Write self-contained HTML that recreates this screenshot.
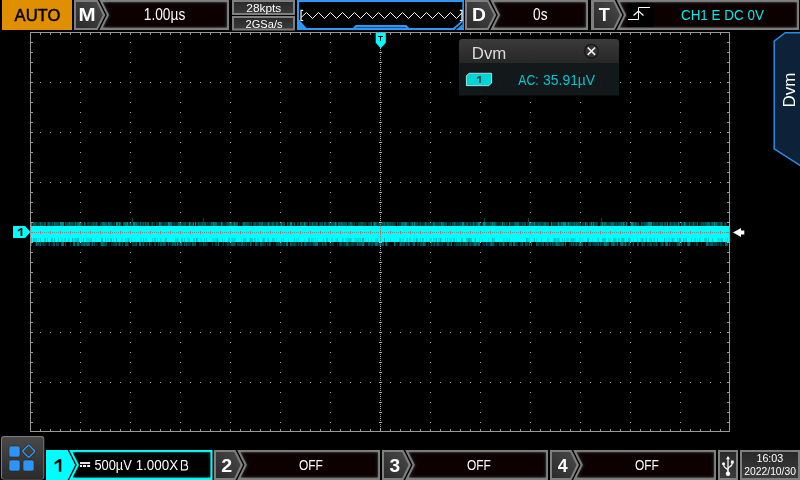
<!DOCTYPE html>
<html><head><meta charset="utf-8"><title>Scope</title>
<style>
html,body{margin:0;padding:0;background:#000;overflow:hidden}
body{width:800px;height:480px;position:relative;font-family:"Liberation Sans",sans-serif}
svg{position:absolute;left:0;top:0;display:block}
text{font-family:"Liberation Sans",sans-serif}
</style></head><body>
<svg width="800" height="480" viewBox="0 0 800 480" style="will-change:transform;opacity:0.9999">
<defs>
<linearGradient id="lab" x1="0" y1="1" x2="1" y2="0">
<stop offset="0" stop-color="#2b2b2b"/><stop offset="1" stop-color="#4a4a4a"/>
</linearGradient>
<linearGradient id="small" x1="0" y1="0" x2="0" y2="1">
<stop offset="0" stop-color="#2a2a2a"/><stop offset="1" stop-color="#3c3c3c"/>
</linearGradient>
<linearGradient id="menu" x1="0" y1="0" x2="0" y2="1">
<stop offset="0" stop-color="#4a4a4a"/><stop offset="1" stop-color="#2c2c2c"/>
</linearGradient>
<linearGradient id="dvmh" x1="0" y1="0" x2="0" y2="1">
<stop offset="0" stop-color="#404040"/><stop offset="1" stop-color="#2b2b2b"/>
</linearGradient>
<filter id="blur1" x="-10%" y="-10%" width="120%" height="120%"><feGaussianBlur stdDeviation="0.8"/></filter>
</defs>
<rect width="800" height="480" fill="#000"/>

<g id="topbar">
<rect x="2" y="0" width="70" height="30" fill="#e09000"/>
<text transform="translate(14.56,20.7) scale(1.0378,1)" font-size="16" fill="#000" font-weight="normal" stroke="#000" stroke-width="0.45">AUTO</text>
<polygon points="74,0 97.7,0 105.3,15.0 97.7,30 74,30" fill="#808080"/>
<polygon points="76,2 96.51333333333334,2 102.8,15.0 96.51333333333334,28 76,28" fill="url(#lab)"/>
<text transform="translate(78.51,21) scale(1.1241,1)" font-size="18.3" fill="#fff" font-weight="bold">M</text>
<polygon points="99.3,0 229,0 229,30 99.3,30 106.8,15.0" fill="#808080"/>
<polygon points="102.78,2.15 226.85,2.15 226.85,27.6 102.90,27.6 109.20,15.0" fill="#242020"/>
<polygon points="105.29,3.7 225.3,3.7 225.3,26.1 105.39,26.1 110.94,15.0" fill="#080404" stroke="#080404" stroke-width="0.8" stroke-linejoin="round" filter="url(#blur1)"/>
<text transform="translate(143.77,19.8) scale(0.8584,1)" font-size="16" fill="#fff" font-weight="normal">1.00µs</text>
<rect x="232" y="0" width="63" height="15" fill="#808080"/>
<rect x="234" y="2" width="59" height="11" fill="url(#small)"/>
<text transform="translate(246.31,12.1) scale(1.0328,1)" font-size="11.5" fill="#fff" font-weight="normal">28kpts</text>
<rect x="232" y="16" width="63" height="14.5" fill="#808080"/>
<rect x="234" y="18" width="59" height="10.5" fill="url(#small)"/>
<text transform="translate(245.54,28.1) scale(0.9659,1)" font-size="11.5" fill="#fff" font-weight="normal">2GSa/s</text>
<rect x="297" y="0" width="167" height="30" fill="#2b99f8"/>
<rect x="299" y="2" width="163.3" height="26" fill="#000"/>
<polygon points="299,19.5 306.5,28 299,28" fill="#2b99f8"/>
<polygon points="452.8,28.2 462.4,19.9 462.4,22.4 455.8,28.2" fill="#2b99f8"/>
<polygon points="462.4,22.4 462.4,23.9 456.1,30 454.3,30" fill="#000"/>
<polygon points="462.4,23.9 462.4,30 456.1,30" fill="#2b99f8"/>
<polygon points="352.8,28 355.6,25 406.4,25 409.2,28" fill="#2b99f8"/>
<polygon points="355.6,27.9 356.6,26.9 405.4,26.9 406.4,27.9" fill="#184f85"/>
<polyline fill="none" stroke="#fff" stroke-width="1" points="301.3,17.3 306.5,12.5 312.5,18.5 318.5,12.5 324.5,18.5 330.5,12.5 336.5,18.5 342.5,12.5 348.5,18.5 354.5,12.5 360.5,18.5 366.5,12.5 372.5,18.5 378.5,12.5 384.5,18.5 390.5,12.5 396.5,18.5 402.5,12.5 408.5,18.5 414.5,12.5 420.5,18.5 426.5,12.5 432.5,18.5 438.5,12.5 444.5,18.5 450.5,12.5 456.5,18.5 461.8,13"/>
<path d="M303.2 10.4 H301 V20.5 H303.2" fill="none" stroke="#fff" stroke-width="1.2"/>
<path d="M459.8 10.4 H462 V20.5 H459.8" fill="none" stroke="#fff" stroke-width="1.2"/>
<polygon points="465,0 488.5,0 496.3,15.0 488.5,30 465,30" fill="#808080"/>
<polygon points="467,2 487.34000000000003,2 493.8,15.0 487.34000000000003,28 467,28" fill="url(#lab)"/>
<text transform="translate(471.90,21) scale(1.0527,1)" font-size="18.3" fill="#fff" font-weight="bold">D</text>
<polygon points="490.3,0 588,0 588,30 490.3,30 497.8,15.0" fill="#808080"/>
<polygon points="493.78,2.15 585.85,2.15 585.85,27.6 493.90,27.6 500.20,15.0" fill="#242020"/>
<polygon points="496.29,3.7 584.3,3.7 584.3,26.1 496.39,26.1 501.94,15.0" fill="#080404" stroke="#080404" stroke-width="0.8" stroke-linejoin="round" filter="url(#blur1)"/>
<text transform="translate(533.05,19.8) scale(0.8546,1)" font-size="16" fill="#fff" font-weight="normal">0s</text>
<polygon points="591,0 614.7,0 622.3,15.0 614.7,30 591,30" fill="#808080"/>
<polygon points="594,2 613.5133333333333,2 619.8,15.0 613.5133333333333,28 594,28" fill="url(#lab)"/>
<text transform="translate(598.82,21) scale(0.9910,1)" font-size="18.3" fill="#fff" font-weight="bold">T</text>
<polygon points="616.5,0 799,0 799,30 616.5,30 623.9,15.0" fill="#808080"/>
<polygon points="619.96,2.15 796.85,2.15 796.85,27.6 620.08,27.6 626.30,15.0" fill="#242020"/>
<polygon points="622.45,3.7 795.3,3.7 795.3,26.1 622.55,26.1 628.03,15.0" fill="#080404" stroke="#080404" stroke-width="0.8" stroke-linejoin="round" filter="url(#blur1)"/>
<rect x="627" y="3" width="26" height="24" fill="#000"/>
<path d="M628 19.5 H638.5 V7.5 H650" fill="none" stroke="#fff" stroke-width="1"/>
<path d="M633.5 15.5 L638.5 11 L643.5 15.5" fill="none" stroke="#fff" stroke-width="1.2"/>
<text transform="translate(680.93,19.6) scale(0.8683,1)" font-size="15.5" fill="#00ecec" font-weight="normal">CH1 E DC 0V</text>
</g>
<g id="grid" shape-rendering="crispEdges">
<rect x="30.5" y="32.5" width="699" height="399" fill="none" stroke="#9a9a9a" stroke-width="1"/>
<path d="M40 34 H721" stroke="#9a9a9a" stroke-width="2" stroke-dasharray="1 9" fill="none"/>
<path d="M40 430 H721" stroke="#9a9a9a" stroke-width="2" stroke-dasharray="1 9" fill="none"/>
<path d="M32 42 V423" stroke="#9a9a9a" stroke-width="2" stroke-dasharray="1 9" fill="none"/>
<path d="M728 42 V423" stroke="#9a9a9a" stroke-width="2" stroke-dasharray="1 9" fill="none"/>
<path d="M40 82.5 H721" stroke="#a8a8a8" stroke-width="1" stroke-dasharray="1 9" fill="none"/>
<path d="M40 132.5 H721" stroke="#a8a8a8" stroke-width="1" stroke-dasharray="1 9" fill="none"/>
<path d="M40 182.5 H721" stroke="#a8a8a8" stroke-width="1" stroke-dasharray="1 9" fill="none"/>
<path d="M40 282.5 H721" stroke="#a8a8a8" stroke-width="1" stroke-dasharray="1 9" fill="none"/>
<path d="M40 332.5 H721" stroke="#a8a8a8" stroke-width="1" stroke-dasharray="1 9" fill="none"/>
<path d="M40 382.5 H721" stroke="#a8a8a8" stroke-width="1" stroke-dasharray="1 9" fill="none"/>
<path d="M80.5 42 V423" stroke="#a8a8a8" stroke-width="1" stroke-dasharray="1 9" fill="none"/>
<path d="M130.5 42 V423" stroke="#a8a8a8" stroke-width="1" stroke-dasharray="1 9" fill="none"/>
<path d="M180.5 42 V423" stroke="#a8a8a8" stroke-width="1" stroke-dasharray="1 9" fill="none"/>
<path d="M230.5 42 V423" stroke="#a8a8a8" stroke-width="1" stroke-dasharray="1 9" fill="none"/>
<path d="M280.5 42 V423" stroke="#a8a8a8" stroke-width="1" stroke-dasharray="1 9" fill="none"/>
<path d="M330.5 42 V423" stroke="#a8a8a8" stroke-width="1" stroke-dasharray="1 9" fill="none"/>
<path d="M430.5 42 V423" stroke="#a8a8a8" stroke-width="1" stroke-dasharray="1 9" fill="none"/>
<path d="M480.5 42 V423" stroke="#a8a8a8" stroke-width="1" stroke-dasharray="1 9" fill="none"/>
<path d="M530.5 42 V423" stroke="#a8a8a8" stroke-width="1" stroke-dasharray="1 9" fill="none"/>
<path d="M580.5 42 V423" stroke="#a8a8a8" stroke-width="1" stroke-dasharray="1 9" fill="none"/>
<path d="M630.5 42 V423" stroke="#a8a8a8" stroke-width="1" stroke-dasharray="1 9" fill="none"/>
<path d="M680.5 42 V423" stroke="#a8a8a8" stroke-width="1" stroke-dasharray="1 9" fill="none"/>
<path d="M380.5 34 V431" stroke="#a8a8a8" stroke-width="1" stroke-dasharray="1 1" fill="none"/>
<path d="M380.5 42 V423" stroke="#a8a8a8" stroke-width="3" stroke-dasharray="1 9" fill="none"/>
</g>
<g id="trace" shape-rendering="crispEdges">
<rect x="31" y="226" width="698" height="12" fill="#00ffff"/>
<rect x="31" y="238" width="698" height="4" fill="#00ffff"/>
<path d="M32 222h1v4h-1zM37 222h1v4h-1zM43 222h1v4h-1zM50 222h2v4h-2zM53 222h1v4h-1zM59 222h1v4h-1zM82 222h1v4h-1zM89 222h2v4h-2zM97 222h1v4h-1zM107 222h1v4h-1zM112 222h2v4h-2zM121 222h1v4h-1zM132 222h1v4h-1zM139 222h1v4h-1zM141 222h1v4h-1zM144 222h1v4h-1zM153 222h1v4h-1zM154 222h1v4h-1zM157 222h2v4h-2zM162 222h1v4h-1zM163 222h1v4h-1zM172 222h2v4h-2zM175 222h1v4h-1zM176 222h1v4h-1zM186 222h2v4h-2zM196 222h2v4h-2zM206 222h1v4h-1zM208 222h1v4h-1zM209 222h1v4h-1zM217 222h1v4h-1zM218 222h1v4h-1zM219 222h1v4h-1zM220 222h1v4h-1zM223 222h1v4h-1zM224 222h2v4h-2zM239 222h1v4h-1zM250 222h1v4h-1zM256 222h1v4h-1zM263 222h1v4h-1zM266 222h1v4h-1zM270 222h1v4h-1zM275 222h1v4h-1zM279 222h1v4h-1zM288 222h2v4h-2zM292 222h2v4h-2zM298 222h1v4h-1zM326 222h2v4h-2zM353 222h1v4h-1zM356 222h1v4h-1zM366 222h1v4h-1zM395 222h1v4h-1zM398 222h1v4h-1zM400 222h1v4h-1zM413 222h1v4h-1zM418 222h1v4h-1zM421 222h2v4h-2zM423 222h1v4h-1zM427 222h1v4h-1zM448 222h1v4h-1zM449 222h1v4h-1zM456 222h1v4h-1zM465 222h1v4h-1zM468 222h2v4h-2zM471 222h1v4h-1zM475 222h1v4h-1zM480 222h1v4h-1zM481 222h1v4h-1zM497 222h2v4h-2zM499 222h1v4h-1zM501 222h1v4h-1zM503 222h1v4h-1zM507 222h1v4h-1zM519 222h2v4h-2zM521 222h1v4h-1zM523 222h1v4h-1zM556 222h1v4h-1zM584 222h1v4h-1zM607 222h1v4h-1zM617 222h1v4h-1zM627 222h1v4h-1zM643 222h1v4h-1zM652 222h1v4h-1zM658 222h1v4h-1zM659 222h1v4h-1zM666 222h1v4h-1zM677 222h1v4h-1zM687 222h2v4h-2zM690 222h1v4h-1zM696 222h1v4h-1zM699 222h2v4h-2zM710 222h1v4h-1zM722 222h1v4h-1zM724 222h1v4h-1zM726 222h1v4h-1z" fill="#003030"/>
<path d="M36 222h1v4h-1zM38 222h1v4h-1zM39 222h1v4h-1zM41 222h1v4h-1zM42 222h1v4h-1zM47 222h1v4h-1zM58 222h1v4h-1zM66 222h1v4h-1zM73 222h1v4h-1zM74 222h1v4h-1zM76 222h1v4h-1zM85 222h1v4h-1zM87 222h1v4h-1zM88 222h1v4h-1zM91 222h2v4h-2zM94 222h2v4h-2zM100 222h2v4h-2zM114 222h1v4h-1zM118 222h1v4h-1zM128 222h1v4h-1zM129 222h1v4h-1zM131 222h1v4h-1zM137 222h1v4h-1zM138 222h1v4h-1zM142 222h1v4h-1zM146 222h1v4h-1zM151 222h1v4h-1zM156 222h1v4h-1zM164 222h1v4h-1zM165 222h1v4h-1zM166 222h1v4h-1zM167 222h1v4h-1zM174 222h1v4h-1zM177 222h1v4h-1zM181 222h1v4h-1zM182 222h1v4h-1zM183 222h1v4h-1zM188 222h1v4h-1zM191 222h2v4h-2zM199 222h1v4h-1zM200 222h1v4h-1zM201 222h1v4h-1zM203 222h1v4h-1zM207 222h1v4h-1zM210 222h1v4h-1zM226 222h1v4h-1zM232 222h1v4h-1zM242 222h1v4h-1zM249 222h1v4h-1zM253 222h1v4h-1zM257 222h2v4h-2zM264 222h2v4h-2zM269 222h1v4h-1zM271 222h1v4h-1zM274 222h1v4h-1zM278 222h1v4h-1zM282 222h1v4h-1zM302 222h1v4h-1zM303 222h1v4h-1zM306 222h2v4h-2zM310 222h2v4h-2zM313 222h1v4h-1zM314 222h1v4h-1zM315 222h1v4h-1zM319 222h1v4h-1zM330 222h1v4h-1zM343 222h1v4h-1zM348 222h1v4h-1zM352 222h1v4h-1zM354 222h1v4h-1zM359 222h1v4h-1zM360 222h1v4h-1zM363 222h1v4h-1zM364 222h1v4h-1zM365 222h1v4h-1zM368 222h1v4h-1zM369 222h2v4h-2zM377 222h1v4h-1zM378 222h1v4h-1zM381 222h1v4h-1zM385 222h1v4h-1zM386 222h1v4h-1zM391 222h1v4h-1zM393 222h1v4h-1zM394 222h1v4h-1zM397 222h1v4h-1zM399 222h1v4h-1zM407 222h2v4h-2zM410 222h1v4h-1zM411 222h1v4h-1zM415 222h2v4h-2zM419 222h1v4h-1zM424 222h1v4h-1zM429 222h1v4h-1zM430 222h1v4h-1zM431 222h1v4h-1zM432 222h1v4h-1zM435 222h2v4h-2zM438 222h1v4h-1zM440 222h1v4h-1zM444 222h1v4h-1zM450 222h1v4h-1zM453 222h1v4h-1zM457 222h1v4h-1zM458 222h1v4h-1zM459 222h1v4h-1zM461 222h1v4h-1zM464 222h1v4h-1zM472 222h1v4h-1zM482 222h1v4h-1zM486 222h2v4h-2zM488 222h1v4h-1zM489 222h1v4h-1zM496 222h1v4h-1zM500 222h1v4h-1zM510 222h1v4h-1zM511 222h1v4h-1zM512 222h1v4h-1zM513 222h1v4h-1zM527 222h1v4h-1zM528 222h1v4h-1zM535 222h1v4h-1zM536 222h1v4h-1zM537 222h1v4h-1zM541 222h1v4h-1zM542 222h1v4h-1zM546 222h1v4h-1zM552 222h1v4h-1zM553 222h2v4h-2zM555 222h1v4h-1zM559 222h1v4h-1zM560 222h1v4h-1zM566 222h1v4h-1zM571 222h1v4h-1zM575 222h1v4h-1zM582 222h2v4h-2zM586 222h1v4h-1zM589 222h2v4h-2zM592 222h1v4h-1zM594 222h2v4h-2zM597 222h1v4h-1zM600 222h1v4h-1zM603 222h1v4h-1zM608 222h1v4h-1zM609 222h1v4h-1zM614 222h2v4h-2zM618 222h1v4h-1zM630 222h1v4h-1zM634 222h1v4h-1zM637 222h2v4h-2zM642 222h1v4h-1zM645 222h1v4h-1zM654 222h1v4h-1zM655 222h2v4h-2zM669 222h1v4h-1zM671 222h1v4h-1zM672 222h2v4h-2zM675 222h2v4h-2zM679 222h1v4h-1zM682 222h2v4h-2zM686 222h1v4h-1zM691 222h2v4h-2zM694 222h1v4h-1zM695 222h1v4h-1zM702 222h1v4h-1zM704 222h1v4h-1zM717 222h1v4h-1zM718 222h2v4h-2z" fill="#004444"/>
<path d="M34 222h1v4h-1zM35 222h1v4h-1zM44 222h1v4h-1zM45 222h1v4h-1zM49 222h1v4h-1zM52 222h1v4h-1zM55 222h2v4h-2zM57 222h1v4h-1zM65 222h1v4h-1zM67 222h2v4h-2zM70 222h1v4h-1zM71 222h2v4h-2zM80 222h2v4h-2zM93 222h1v4h-1zM105 222h1v4h-1zM106 222h1v4h-1zM110 222h2v4h-2zM120 222h1v4h-1zM123 222h1v4h-1zM135 222h1v4h-1zM143 222h1v4h-1zM147 222h1v4h-1zM152 222h1v4h-1zM161 222h1v4h-1zM184 222h1v4h-1zM185 222h1v4h-1zM190 222h1v4h-1zM204 222h1v4h-1zM212 222h1v4h-1zM222 222h1v4h-1zM227 222h1v4h-1zM228 222h1v4h-1zM233 222h1v4h-1zM235 222h1v4h-1zM236 222h1v4h-1zM245 222h2v4h-2zM247 222h1v4h-1zM248 222h1v4h-1zM251 222h1v4h-1zM254 222h1v4h-1zM255 222h1v4h-1zM260 222h1v4h-1zM267 222h1v4h-1zM273 222h1v4h-1zM277 222h1v4h-1zM280 222h1v4h-1zM283 222h1v4h-1zM284 222h1v4h-1zM297 222h1v4h-1zM301 222h1v4h-1zM305 222h1v4h-1zM309 222h1v4h-1zM317 222h1v4h-1zM320 222h1v4h-1zM321 222h1v4h-1zM322 222h1v4h-1zM325 222h1v4h-1zM328 222h1v4h-1zM331 222h2v4h-2zM333 222h1v4h-1zM334 222h1v4h-1zM336 222h1v4h-1zM340 222h1v4h-1zM344 222h1v4h-1zM345 222h2v4h-2zM349 222h1v4h-1zM358 222h1v4h-1zM361 222h1v4h-1zM362 222h1v4h-1zM373 222h1v4h-1zM376 222h1v4h-1zM379 222h2v4h-2zM382 222h1v4h-1zM383 222h1v4h-1zM388 222h2v4h-2zM390 222h1v4h-1zM392 222h1v4h-1zM417 222h1v4h-1zM420 222h1v4h-1zM426 222h1v4h-1zM428 222h1v4h-1zM437 222h1v4h-1zM439 222h1v4h-1zM445 222h2v4h-2zM452 222h1v4h-1zM455 222h1v4h-1zM460 222h1v4h-1zM466 222h1v4h-1zM470 222h1v4h-1zM474 222h1v4h-1zM476 222h1v4h-1zM477 222h1v4h-1zM490 222h2v4h-2zM495 222h1v4h-1zM504 222h1v4h-1zM506 222h1v4h-1zM514 222h1v4h-1zM522 222h1v4h-1zM524 222h1v4h-1zM525 222h1v4h-1zM532 222h2v4h-2zM539 222h1v4h-1zM540 222h1v4h-1zM543 222h1v4h-1zM547 222h2v4h-2zM557 222h1v4h-1zM567 222h1v4h-1zM569 222h1v4h-1zM570 222h1v4h-1zM572 222h2v4h-2zM577 222h1v4h-1zM578 222h1v4h-1zM579 222h1v4h-1zM580 222h1v4h-1zM587 222h1v4h-1zM596 222h1v4h-1zM601 222h1v4h-1zM606 222h1v4h-1zM610 222h1v4h-1zM616 222h1v4h-1zM619 222h1v4h-1zM620 222h1v4h-1zM622 222h1v4h-1zM624 222h1v4h-1zM636 222h1v4h-1zM641 222h1v4h-1zM644 222h1v4h-1zM646 222h1v4h-1zM653 222h1v4h-1zM657 222h1v4h-1zM660 222h2v4h-2zM662 222h1v4h-1zM664 222h1v4h-1zM665 222h1v4h-1zM685 222h1v4h-1zM701 222h1v4h-1zM703 222h1v4h-1zM705 222h1v4h-1zM706 222h1v4h-1zM711 222h1v4h-1zM713 222h1v4h-1zM715 222h1v4h-1zM720 222h1v4h-1zM725 222h1v4h-1z" fill="#005858"/>
<path d="M33 222h1v4h-1zM40 222h1v4h-1zM48 222h1v4h-1zM54 222h1v4h-1zM69 222h1v4h-1zM75 222h1v4h-1zM77 222h1v4h-1zM78 222h1v4h-1zM84 222h1v4h-1zM96 222h1v4h-1zM102 222h1v4h-1zM103 222h2v4h-2zM108 222h2v4h-2zM124 222h1v4h-1zM125 222h2v4h-2zM130 222h1v4h-1zM136 222h1v4h-1zM140 222h1v4h-1zM145 222h1v4h-1zM148 222h1v4h-1zM160 222h1v4h-1zM170 222h2v4h-2zM178 222h2v4h-2zM180 222h1v4h-1zM198 222h1v4h-1zM202 222h1v4h-1zM205 222h1v4h-1zM211 222h1v4h-1zM214 222h1v4h-1zM215 222h1v4h-1zM216 222h1v4h-1zM229 222h2v4h-2zM231 222h1v4h-1zM237 222h1v4h-1zM243 222h1v4h-1zM244 222h1v4h-1zM259 222h1v4h-1zM261 222h2v4h-2zM272 222h1v4h-1zM276 222h1v4h-1zM287 222h1v4h-1zM294 222h1v4h-1zM300 222h1v4h-1zM312 222h1v4h-1zM316 222h1v4h-1zM324 222h1v4h-1zM329 222h1v4h-1zM338 222h1v4h-1zM339 222h1v4h-1zM341 222h2v4h-2zM350 222h2v4h-2zM371 222h1v4h-1zM375 222h1v4h-1zM384 222h1v4h-1zM387 222h1v4h-1zM401 222h2v4h-2zM403 222h2v4h-2zM406 222h1v4h-1zM425 222h1v4h-1zM433 222h2v4h-2zM442 222h2v4h-2zM454 222h1v4h-1zM467 222h1v4h-1zM473 222h1v4h-1zM485 222h1v4h-1zM493 222h2v4h-2zM515 222h2v4h-2zM517 222h2v4h-2zM530 222h2v4h-2zM538 222h1v4h-1zM544 222h1v4h-1zM545 222h1v4h-1zM561 222h2v4h-2zM574 222h1v4h-1zM576 222h1v4h-1zM604 222h2v4h-2zM611 222h1v4h-1zM612 222h1v4h-1zM613 222h1v4h-1zM621 222h1v4h-1zM633 222h1v4h-1zM635 222h1v4h-1zM647 222h1v4h-1zM670 222h1v4h-1zM674 222h1v4h-1zM681 222h1v4h-1zM689 222h1v4h-1zM693 222h1v4h-1zM697 222h1v4h-1zM707 222h1v4h-1zM708 222h2v4h-2zM712 222h1v4h-1zM716 222h1v4h-1zM721 222h1v4h-1z" fill="#006e6e"/>
<path d="M31 222h1v4h-1zM60 222h2v4h-2zM62 222h2v4h-2zM79 222h1v4h-1zM116 222h1v4h-1zM117 222h1v4h-1zM119 222h1v4h-1zM127 222h1v4h-1zM133 222h2v4h-2zM159 222h1v4h-1zM168 222h2v4h-2zM189 222h1v4h-1zM193 222h1v4h-1zM195 222h1v4h-1zM213 222h1v4h-1zM221 222h1v4h-1zM234 222h1v4h-1zM268 222h1v4h-1zM281 222h1v4h-1zM290 222h1v4h-1zM291 222h1v4h-1zM304 222h1v4h-1zM335 222h1v4h-1zM374 222h1v4h-1zM405 222h1v4h-1zM412 222h1v4h-1zM414 222h1v4h-1zM441 222h1v4h-1zM462 222h2v4h-2zM478 222h2v4h-2zM483 222h2v4h-2zM492 222h1v4h-1zM502 222h1v4h-1zM509 222h1v4h-1zM529 222h1v4h-1zM534 222h1v4h-1zM551 222h1v4h-1zM558 222h1v4h-1zM563 222h2v4h-2zM565 222h1v4h-1zM568 222h1v4h-1zM585 222h1v4h-1zM591 222h1v4h-1zM593 222h1v4h-1zM602 222h1v4h-1zM623 222h1v4h-1zM626 222h1v4h-1zM631 222h1v4h-1zM632 222h1v4h-1zM648 222h2v4h-2zM650 222h1v4h-1zM651 222h1v4h-1zM667 222h1v4h-1zM678 222h1v4h-1zM684 222h1v4h-1zM714 222h1v4h-1z" fill="#008c8c"/>
<path d="M51 238h1v4h-1zM54 238h1v4h-1zM72 238h1v4h-1zM78 238h1v4h-1zM83 238h1v4h-1zM101 238h2v4h-2zM105 238h1v4h-1zM111 238h1v4h-1zM116 238h1v4h-1zM128 238h1v4h-1zM143 238h1v4h-1zM196 238h1v4h-1zM217 238h1v4h-1zM250 238h1v4h-1zM263 238h1v4h-1zM337 238h1v4h-1zM362 238h2v4h-2zM384 238h1v4h-1zM416 238h1v4h-1zM436 238h1v4h-1zM440 238h1v4h-1zM461 238h1v4h-1zM468 238h1v4h-1zM469 238h2v4h-2zM475 238h1v4h-1zM492 238h1v4h-1zM526 238h1v4h-1zM534 238h1v4h-1zM554 238h1v4h-1zM587 238h2v4h-2zM622 238h1v4h-1zM623 238h1v4h-1zM642 238h1v4h-1zM646 238h1v4h-1zM657 238h1v4h-1zM664 238h1v4h-1zM672 238h1v4h-1zM679 238h1v4h-1zM680 238h1v4h-1zM683 238h1v4h-1zM708 238h1v4h-1z" fill="#00c0c0"/>
<path d="M31 238h1v4h-1zM33 238h2v4h-2zM36 238h1v4h-1zM40 238h1v4h-1zM44 238h1v4h-1zM45 238h1v4h-1zM47 238h1v4h-1zM52 238h1v4h-1zM58 238h1v4h-1zM65 238h1v4h-1zM68 238h1v4h-1zM75 238h1v4h-1zM76 238h1v4h-1zM77 238h1v4h-1zM91 238h1v4h-1zM110 238h1v4h-1zM125 238h1v4h-1zM152 238h1v4h-1zM154 238h2v4h-2zM157 238h1v4h-1zM160 238h1v4h-1zM165 238h1v4h-1zM166 238h1v4h-1zM175 238h1v4h-1zM177 238h1v4h-1zM181 238h2v4h-2zM184 238h1v4h-1zM189 238h1v4h-1zM193 238h2v4h-2zM197 238h1v4h-1zM204 238h1v4h-1zM206 238h1v4h-1zM216 238h1v4h-1zM222 238h1v4h-1zM228 238h1v4h-1zM229 238h1v4h-1zM232 238h1v4h-1zM234 238h1v4h-1zM243 238h1v4h-1zM244 238h1v4h-1zM245 238h1v4h-1zM251 238h1v4h-1zM252 238h1v4h-1zM254 238h1v4h-1zM264 238h1v4h-1zM268 238h1v4h-1zM272 238h1v4h-1zM281 238h1v4h-1zM283 238h1v4h-1zM294 238h1v4h-1zM308 238h2v4h-2zM311 238h1v4h-1zM323 238h1v4h-1zM326 238h1v4h-1zM327 238h1v4h-1zM342 238h1v4h-1zM348 238h2v4h-2zM350 238h1v4h-1zM357 238h1v4h-1zM360 238h1v4h-1zM377 238h1v4h-1zM400 238h1v4h-1zM407 238h1v4h-1zM417 238h1v4h-1zM420 238h1v4h-1zM422 238h2v4h-2zM433 238h1v4h-1zM445 238h1v4h-1zM447 238h1v4h-1zM453 238h2v4h-2zM462 238h1v4h-1zM466 238h2v4h-2zM471 238h1v4h-1zM494 238h1v4h-1zM509 238h1v4h-1zM527 238h1v4h-1zM541 238h1v4h-1zM555 238h1v4h-1zM557 238h2v4h-2zM562 238h1v4h-1zM564 238h1v4h-1zM571 238h2v4h-2zM573 238h1v4h-1zM598 238h1v4h-1zM602 238h1v4h-1zM603 238h2v4h-2zM605 238h1v4h-1zM613 238h1v4h-1zM614 238h2v4h-2zM618 238h1v4h-1zM621 238h1v4h-1zM628 238h2v4h-2zM649 238h1v4h-1zM651 238h1v4h-1zM654 238h1v4h-1zM677 238h1v4h-1zM686 238h1v4h-1zM691 238h1v4h-1zM695 238h1v4h-1zM697 238h1v4h-1zM699 238h1v4h-1zM704 238h1v4h-1zM705 238h2v4h-2zM712 238h1v4h-1zM721 238h2v4h-2zM727 238h1v4h-1z" fill="#00d4d4"/>
<path d="M35 238h1v4h-1zM38 238h1v4h-1zM61 238h1v4h-1zM62 238h1v4h-1zM64 238h1v4h-1zM69 238h1v4h-1zM73 238h2v4h-2zM81 238h1v4h-1zM86 238h1v4h-1zM87 238h2v4h-2zM89 238h2v4h-2zM95 238h1v4h-1zM107 238h1v4h-1zM108 238h1v4h-1zM113 238h1v4h-1zM121 238h1v4h-1zM122 238h1v4h-1zM126 238h2v4h-2zM129 238h1v4h-1zM131 238h1v4h-1zM134 238h1v4h-1zM140 238h1v4h-1zM141 238h1v4h-1zM145 238h2v4h-2zM161 238h1v4h-1zM164 238h1v4h-1zM176 238h1v4h-1zM178 238h1v4h-1zM187 238h2v4h-2zM200 238h2v4h-2zM212 238h1v4h-1zM213 238h1v4h-1zM214 238h1v4h-1zM215 238h1v4h-1zM218 238h1v4h-1zM224 238h1v4h-1zM231 238h1v4h-1zM233 238h1v4h-1zM235 238h1v4h-1zM241 238h1v4h-1zM246 238h1v4h-1zM249 238h1v4h-1zM255 238h1v4h-1zM257 238h1v4h-1zM258 238h1v4h-1zM262 238h1v4h-1zM267 238h1v4h-1zM273 238h1v4h-1zM274 238h1v4h-1zM276 238h1v4h-1zM288 238h1v4h-1zM296 238h1v4h-1zM298 238h1v4h-1zM304 238h1v4h-1zM312 238h1v4h-1zM313 238h1v4h-1zM315 238h1v4h-1zM317 238h1v4h-1zM331 238h2v4h-2zM335 238h2v4h-2zM343 238h1v4h-1zM345 238h1v4h-1zM346 238h2v4h-2zM351 238h1v4h-1zM354 238h2v4h-2zM356 238h1v4h-1zM358 238h1v4h-1zM359 238h1v4h-1zM365 238h1v4h-1zM368 238h1v4h-1zM371 238h1v4h-1zM375 238h1v4h-1zM376 238h1v4h-1zM380 238h1v4h-1zM388 238h1v4h-1zM390 238h1v4h-1zM399 238h1v4h-1zM402 238h2v4h-2zM406 238h1v4h-1zM409 238h1v4h-1zM410 238h1v4h-1zM413 238h1v4h-1zM414 238h1v4h-1zM426 238h1v4h-1zM429 238h2v4h-2zM431 238h1v4h-1zM434 238h2v4h-2zM438 238h1v4h-1zM439 238h1v4h-1zM441 238h1v4h-1zM449 238h1v4h-1zM450 238h1v4h-1zM451 238h1v4h-1zM456 238h1v4h-1zM474 238h1v4h-1zM479 238h1v4h-1zM482 238h1v4h-1zM488 238h1v4h-1zM493 238h1v4h-1zM503 238h1v4h-1zM504 238h1v4h-1zM506 238h2v4h-2zM528 238h1v4h-1zM529 238h1v4h-1zM536 238h1v4h-1zM547 238h1v4h-1zM548 238h1v4h-1zM553 238h1v4h-1zM556 238h1v4h-1zM559 238h1v4h-1zM566 238h1v4h-1zM567 238h2v4h-2zM570 238h1v4h-1zM574 238h1v4h-1zM575 238h1v4h-1zM579 238h1v4h-1zM580 238h1v4h-1zM582 238h1v4h-1zM592 238h1v4h-1zM597 238h1v4h-1zM608 238h1v4h-1zM609 238h1v4h-1zM610 238h1v4h-1zM616 238h1v4h-1zM619 238h1v4h-1zM624 238h1v4h-1zM626 238h1v4h-1zM630 238h1v4h-1zM633 238h1v4h-1zM637 238h1v4h-1zM640 238h1v4h-1zM641 238h1v4h-1zM643 238h1v4h-1zM645 238h1v4h-1zM650 238h1v4h-1zM653 238h1v4h-1zM666 238h1v4h-1zM668 238h2v4h-2zM671 238h1v4h-1zM673 238h2v4h-2zM678 238h1v4h-1zM684 238h1v4h-1zM685 238h1v4h-1zM694 238h1v4h-1zM700 238h1v4h-1zM717 238h1v4h-1zM718 238h1v4h-1zM719 238h2v4h-2zM725 238h1v4h-1z" fill="#00e6e6"/>
<path d="M35 242h1v4h-1zM39 242h1v4h-1zM42 242h1v4h-1zM44 242h1v4h-1zM45 242h2v4h-2zM48 242h1v4h-1zM51 242h1v4h-1zM52 242h1v4h-1zM75 242h2v4h-2zM80 242h1v4h-1zM91 242h1v4h-1zM96 242h2v4h-2zM100 242h1v4h-1zM109 242h1v4h-1zM112 242h1v4h-1zM128 242h1v4h-1zM144 242h1v4h-1zM147 242h1v4h-1zM150 242h2v4h-2zM162 242h1v4h-1zM170 242h2v4h-2zM176 242h1v4h-1zM182 242h1v4h-1zM185 242h1v4h-1zM187 242h1v4h-1zM190 242h1v4h-1zM199 242h2v4h-2zM201 242h1v4h-1zM204 242h1v4h-1zM206 242h1v4h-1zM207 242h1v4h-1zM222 242h1v4h-1zM225 242h1v4h-1zM226 242h1v4h-1zM229 242h1v4h-1zM240 242h1v4h-1zM243 242h1v4h-1zM248 242h1v4h-1zM253 242h1v4h-1zM258 242h1v4h-1zM264 242h1v4h-1zM268 242h1v4h-1zM273 242h1v4h-1zM282 242h2v4h-2zM296 242h1v4h-1zM300 242h1v4h-1zM302 242h1v4h-1zM307 242h1v4h-1zM308 242h1v4h-1zM311 242h2v4h-2zM319 242h2v4h-2zM323 242h1v4h-1zM324 242h1v4h-1zM329 242h1v4h-1zM331 242h1v4h-1zM333 242h1v4h-1zM337 242h1v4h-1zM342 242h1v4h-1zM343 242h1v4h-1zM345 242h1v4h-1zM349 242h1v4h-1zM350 242h1v4h-1zM354 242h1v4h-1zM355 242h2v4h-2zM364 242h1v4h-1zM366 242h1v4h-1zM370 242h1v4h-1zM373 242h2v4h-2zM387 242h1v4h-1zM397 242h1v4h-1zM407 242h1v4h-1zM412 242h1v4h-1zM428 242h1v4h-1zM430 242h1v4h-1zM432 242h1v4h-1zM433 242h1v4h-1zM435 242h1v4h-1zM436 242h1v4h-1zM439 242h1v4h-1zM440 242h2v4h-2zM444 242h1v4h-1zM446 242h1v4h-1zM449 242h1v4h-1zM450 242h1v4h-1zM454 242h1v4h-1zM455 242h1v4h-1zM459 242h1v4h-1zM461 242h2v4h-2zM464 242h1v4h-1zM482 242h2v4h-2zM487 242h1v4h-1zM488 242h2v4h-2zM494 242h1v4h-1zM496 242h1v4h-1zM500 242h2v4h-2zM515 242h1v4h-1zM521 242h1v4h-1zM528 242h1v4h-1zM539 242h1v4h-1zM540 242h1v4h-1zM554 242h1v4h-1zM569 242h2v4h-2zM572 242h1v4h-1zM574 242h1v4h-1zM577 242h1v4h-1zM578 242h1v4h-1zM592 242h1v4h-1zM601 242h1v4h-1zM602 242h1v4h-1zM615 242h1v4h-1zM616 242h1v4h-1zM630 242h1v4h-1zM632 242h1v4h-1zM641 242h1v4h-1zM643 242h1v4h-1zM648 242h1v4h-1zM649 242h1v4h-1zM653 242h1v4h-1zM655 242h1v4h-1zM657 242h1v4h-1zM660 242h1v4h-1zM670 242h1v4h-1zM672 242h1v4h-1zM674 242h1v4h-1zM676 242h1v4h-1zM690 242h1v4h-1zM694 242h1v4h-1zM701 242h1v4h-1zM709 242h1v4h-1zM713 242h1v4h-1zM717 242h2v4h-2zM721 242h2v4h-2zM723 242h1v4h-1z" fill="#002a2a"/>
<path d="M37 242h1v4h-1zM57 242h1v4h-1zM58 242h1v4h-1zM70 242h1v4h-1zM79 242h1v4h-1zM85 242h1v4h-1zM105 242h1v4h-1zM111 242h1v4h-1zM113 242h2v4h-2zM115 242h1v4h-1zM118 242h1v4h-1zM120 242h1v4h-1zM132 242h1v4h-1zM133 242h1v4h-1zM134 242h1v4h-1zM135 242h1v4h-1zM142 242h1v4h-1zM146 242h1v4h-1zM154 242h2v4h-2zM165 242h1v4h-1zM174 242h1v4h-1zM178 242h1v4h-1zM179 242h1v4h-1zM188 242h2v4h-2zM194 242h1v4h-1zM205 242h1v4h-1zM212 242h1v4h-1zM215 242h1v4h-1zM216 242h1v4h-1zM223 242h1v4h-1zM227 242h2v4h-2zM230 242h1v4h-1zM235 242h1v4h-1zM237 242h2v4h-2zM239 242h1v4h-1zM244 242h1v4h-1zM251 242h1v4h-1zM257 242h1v4h-1zM262 242h1v4h-1zM263 242h1v4h-1zM265 242h1v4h-1zM267 242h1v4h-1zM270 242h1v4h-1zM276 242h1v4h-1zM277 242h1v4h-1zM278 242h2v4h-2zM284 242h1v4h-1zM291 242h2v4h-2zM293 242h1v4h-1zM295 242h1v4h-1zM306 242h1v4h-1zM309 242h1v4h-1zM310 242h1v4h-1zM326 242h1v4h-1zM330 242h1v4h-1zM332 242h1v4h-1zM339 242h1v4h-1zM341 242h1v4h-1zM344 242h1v4h-1zM348 242h1v4h-1zM351 242h1v4h-1zM352 242h1v4h-1zM353 242h1v4h-1zM358 242h1v4h-1zM361 242h1v4h-1zM371 242h1v4h-1zM378 242h1v4h-1zM381 242h1v4h-1zM395 242h1v4h-1zM399 242h1v4h-1zM402 242h1v4h-1zM406 242h1v4h-1zM409 242h1v4h-1zM417 242h1v4h-1zM418 242h1v4h-1zM421 242h2v4h-2zM442 242h1v4h-1zM456 242h2v4h-2zM458 242h1v4h-1zM469 242h1v4h-1zM471 242h2v4h-2zM477 242h1v4h-1zM484 242h1v4h-1zM502 242h1v4h-1zM504 242h1v4h-1zM506 242h1v4h-1zM516 242h2v4h-2zM520 242h1v4h-1zM526 242h1v4h-1zM527 242h1v4h-1zM537 242h1v4h-1zM538 242h1v4h-1zM541 242h1v4h-1zM542 242h1v4h-1zM545 242h2v4h-2zM548 242h1v4h-1zM553 242h1v4h-1zM560 242h1v4h-1zM575 242h1v4h-1zM585 242h1v4h-1zM588 242h2v4h-2zM593 242h2v4h-2zM595 242h1v4h-1zM596 242h1v4h-1zM597 242h1v4h-1zM603 242h1v4h-1zM623 242h2v4h-2zM626 242h1v4h-1zM628 242h1v4h-1zM638 242h1v4h-1zM644 242h1v4h-1zM647 242h1v4h-1zM651 242h1v4h-1zM654 242h1v4h-1zM661 242h1v4h-1zM663 242h1v4h-1zM680 242h1v4h-1zM684 242h1v4h-1zM696 242h1v4h-1zM697 242h1v4h-1zM708 242h1v4h-1zM714 242h2v4h-2zM716 242h1v4h-1zM720 242h1v4h-1z" fill="#004040"/>
<path d="M31 242h1v4h-1zM38 242h1v4h-1zM43 242h1v4h-1zM49 242h1v4h-1zM53 242h2v4h-2zM56 242h1v4h-1zM61 242h1v4h-1zM65 242h1v4h-1zM81 242h2v4h-2zM83 242h1v4h-1zM86 242h1v4h-1zM89 242h1v4h-1zM94 242h1v4h-1zM103 242h2v4h-2zM106 242h1v4h-1zM116 242h1v4h-1zM122 242h1v4h-1zM125 242h1v4h-1zM126 242h1v4h-1zM127 242h1v4h-1zM136 242h1v4h-1zM143 242h1v4h-1zM158 242h1v4h-1zM160 242h1v4h-1zM161 242h1v4h-1zM163 242h1v4h-1zM164 242h1v4h-1zM168 242h1v4h-1zM172 242h1v4h-1zM173 242h1v4h-1zM180 242h1v4h-1zM184 242h1v4h-1zM186 242h1v4h-1zM192 242h2v4h-2zM195 242h1v4h-1zM203 242h1v4h-1zM231 242h1v4h-1zM232 242h1v4h-1zM233 242h1v4h-1zM234 242h1v4h-1zM241 242h1v4h-1zM242 242h1v4h-1zM246 242h1v4h-1zM255 242h1v4h-1zM256 242h1v4h-1zM260 242h2v4h-2zM269 242h1v4h-1zM280 242h1v4h-1zM281 242h1v4h-1zM294 242h1v4h-1zM298 242h1v4h-1zM304 242h1v4h-1zM305 242h1v4h-1zM313 242h1v4h-1zM314 242h1v4h-1zM322 242h1v4h-1zM325 242h1v4h-1zM340 242h1v4h-1zM346 242h1v4h-1zM359 242h1v4h-1zM360 242h1v4h-1zM368 242h2v4h-2zM372 242h1v4h-1zM379 242h1v4h-1zM382 242h1v4h-1zM383 242h1v4h-1zM385 242h1v4h-1zM401 242h1v4h-1zM403 242h1v4h-1zM404 242h1v4h-1zM413 242h1v4h-1zM420 242h1v4h-1zM424 242h1v4h-1zM425 242h1v4h-1zM431 242h1v4h-1zM434 242h1v4h-1zM437 242h1v4h-1zM438 242h1v4h-1zM447 242h2v4h-2zM460 242h1v4h-1zM463 242h1v4h-1zM465 242h1v4h-1zM466 242h2v4h-2zM470 242h1v4h-1zM473 242h1v4h-1zM476 242h1v4h-1zM486 242h1v4h-1zM490 242h1v4h-1zM492 242h1v4h-1zM493 242h1v4h-1zM499 242h1v4h-1zM509 242h1v4h-1zM510 242h2v4h-2zM525 242h1v4h-1zM536 242h1v4h-1zM543 242h1v4h-1zM547 242h1v4h-1zM550 242h1v4h-1zM552 242h1v4h-1zM555 242h1v4h-1zM558 242h1v4h-1zM559 242h1v4h-1zM561 242h1v4h-1zM562 242h2v4h-2zM571 242h1v4h-1zM573 242h1v4h-1zM576 242h1v4h-1zM581 242h1v4h-1zM582 242h1v4h-1zM590 242h1v4h-1zM598 242h1v4h-1zM600 242h1v4h-1zM607 242h2v4h-2zM611 242h1v4h-1zM612 242h1v4h-1zM614 242h1v4h-1zM620 242h1v4h-1zM629 242h1v4h-1zM633 242h1v4h-1zM637 242h1v4h-1zM642 242h1v4h-1zM650 242h1v4h-1zM656 242h1v4h-1zM662 242h1v4h-1zM665 242h1v4h-1zM669 242h1v4h-1zM677 242h1v4h-1zM678 242h1v4h-1zM681 242h1v4h-1zM687 242h1v4h-1zM710 242h1v4h-1zM711 242h2v4h-2zM726 242h2v4h-2z" fill="#005858"/>
<path d="M36 242h1v4h-1zM40 242h1v4h-1zM62 242h1v4h-1zM63 242h1v4h-1zM73 242h1v4h-1zM74 242h1v4h-1zM77 242h1v4h-1zM78 242h1v4h-1zM84 242h1v4h-1zM87 242h2v4h-2zM92 242h1v4h-1zM101 242h2v4h-2zM119 242h1v4h-1zM139 242h1v4h-1zM140 242h1v4h-1zM149 242h1v4h-1zM175 242h1v4h-1zM177 242h1v4h-1zM181 242h1v4h-1zM218 242h1v4h-1zM250 242h1v4h-1zM286 242h2v4h-2zM290 242h1v4h-1zM301 242h1v4h-1zM315 242h2v4h-2zM317 242h1v4h-1zM347 242h1v4h-1zM357 242h1v4h-1zM362 242h2v4h-2zM375 242h1v4h-1zM376 242h1v4h-1zM377 242h1v4h-1zM380 242h1v4h-1zM386 242h1v4h-1zM394 242h1v4h-1zM400 242h1v4h-1zM408 242h1v4h-1zM414 242h1v4h-1zM423 242h1v4h-1zM451 242h1v4h-1zM474 242h2v4h-2zM478 242h1v4h-1zM479 242h1v4h-1zM491 242h1v4h-1zM503 242h1v4h-1zM513 242h2v4h-2zM522 242h1v4h-1zM529 242h1v4h-1zM531 242h1v4h-1zM556 242h2v4h-2zM565 242h1v4h-1zM579 242h1v4h-1zM580 242h1v4h-1zM604 242h1v4h-1zM605 242h1v4h-1zM606 242h1v4h-1zM613 242h1v4h-1zM617 242h1v4h-1zM621 242h2v4h-2zM625 242h1v4h-1zM666 242h2v4h-2zM679 242h1v4h-1zM688 242h2v4h-2zM706 242h2v4h-2zM725 242h1v4h-1z" fill="#007070"/>
<path d="M484 218h1v4h-1zM132 218h1v4h-1zM203 218h1v4h-1zM601 218h1v4h-1zM528 218h1v4h-1z" fill="#004848"/>
<path d="M32 232.5 H729" stroke="#b07474" stroke-width="1" stroke-dasharray="1 1" fill="none"/>
<path d="M40 232.5 H721" stroke="#b07474" stroke-width="3" stroke-dasharray="1 9" fill="none"/>
<path d="M380.5 222 V246" stroke="#b07474" stroke-width="1" stroke-dasharray="1 1" fill="none"/>
<path d="M379 222.5 h3 M379 242.5 h3 M31 222.5 h2 M31 242.5 h2 M727 222.5 h2 M727 242.5 h2" stroke="#c4a4a4" stroke-width="1" fill="none"/>
<path d="M31 232.5 h2 M727 232.5 h2" stroke="#b07474" stroke-width="1" fill="none"/>
<path d="M80 222h1v1h-1zM80 242h1v1h-1zM130 222h1v1h-1zM130 242h1v1h-1zM180 222h1v1h-1zM180 242h1v1h-1zM230 222h1v1h-1zM230 242h1v1h-1zM280 222h1v1h-1zM280 242h1v1h-1zM330 222h1v1h-1zM330 242h1v1h-1zM430 222h1v1h-1zM430 242h1v1h-1zM480 222h1v1h-1zM480 242h1v1h-1zM530 222h1v1h-1zM530 242h1v1h-1zM580 222h1v1h-1zM580 242h1v1h-1zM630 222h1v1h-1zM630 242h1v1h-1zM680 222h1v1h-1zM680 242h1v1h-1z" fill="#c4a4a4"/>
</g>
<polygon points="375.7,33 385.8,33 385.8,42.8 380.75,48.2 375.7,42.8" fill="#00ffff"/>
<path d="M378 36.5 H383 M380.5 36.5 V41" stroke="#000" stroke-width="1" fill="none" shape-rendering="crispEdges"/>
<polygon points="13,226 25,226 30.5,232 25,238 13,238" fill="#00ffff"/>
<path d="M22.3 236 V228.1 H20.9 L17.9 230 V231.6 L20.6 230 V236 z" fill="#000"/>
<polygon points="733,232.5 741,228 741,230.5 744.3,230.5 744.3,234.5 741,234.5 741,237" fill="#fff"/>
<g id="dvm">
<path d="M459 63 V42 a3 3 0 0 1 3 -3 H616 a3 3 0 0 1 3 3 V63 z" fill="url(#dvmh)" fill-opacity="0.93"/>
<rect x="459" y="63" width="160" height="32.5" fill="#151c1d" fill-opacity="0.93"/>
<text transform="translate(471.81,59) scale(1.0199,1)" font-size="16.5" fill="#dcdcdc" font-weight="normal">Dvm</text>
<circle cx="591.4" cy="51.15" r="6.9" fill="#343434" stroke="#171717" stroke-width="1.2"/>
<path d="M587.7 47.5 L595.1 54.8 M595.1 47.5 L587.7 54.8" stroke="#f0f0f0" stroke-width="1.7" fill="none"/>
<polygon points="469,73.2 491.7,73.2 491.7,83 488.8,85.7 466.3,85.7 466.3,76" fill="none" stroke="#05090a" stroke-width="2.2"/>
<polygon points="469,73.2 491.7,73.2 491.7,83 488.8,85.7 466.3,85.7 466.3,76" fill="#00d6d6" stroke="#e4f4f4" stroke-width="0.8"/>
<path d="M480.8 83.1 V76 H479.6 L477.1 77.6 V79 L479.2 77.8 V83.1 z" fill="#033c40"/>
<text transform="translate(518.27,84.6) scale(0.8127,1)" font-size="15" fill="#00c8d0" font-weight="normal">AC:</text>
<text transform="translate(543.08,84.6) scale(0.9273,1)" font-size="15" fill="#00c8d0" font-weight="normal">35.91µV</text>
</g>
<polygon points="801,32.7 785.2,32.7 774.2,41.2 774.2,148.8 801,166" fill="#0e2239" stroke="#2b8de8" stroke-width="1.5"/>
<text transform="translate(794.9,107.4) rotate(-90)" font-size="17" fill="#fff" textLength="34.8" lengthAdjust="spacingAndGlyphs">Dvm</text>
<g id="bottom">
<rect x="1" y="436" width="43.3" height="43.6" rx="3" fill="#7c7c7c"/>
<rect x="2" y="437" width="41.4" height="42" rx="2.3" fill="url(#menu)"/>
<rect x="9" y="446" width="11" height="11" rx="2" fill="#2b97fb" stroke="#3a2410" stroke-width="0.6"/>
<rect x="9" y="460" width="11" height="11" rx="2" fill="#2b97fb" stroke="#3a2410" stroke-width="0.6"/>
<rect x="23" y="460" width="11" height="11" rx="2" fill="#2b97fb" stroke="#3a2410" stroke-width="0.6"/>
<rect x="24.2" y="446.7" width="9" height="9" rx="1.2" transform="rotate(45 28.7 451.2)" fill="none" stroke="#3a2410" stroke-width="2.6"/>
<rect x="24.2" y="446.7" width="9" height="9" rx="1.2" transform="rotate(45 28.7 451.2)" fill="none" stroke="#2b97fb" stroke-width="1.5"/>
<polygon points="46,450 67.7,450 75.2,465.0 67.7,480 46,480" fill="#00ffff"/>
<polygon points="48,452 66.5,452 72.7,465.0 66.5,478 48,478" fill="#00ffff"/>
<path d="M61.3 471.85 V459.1 H59.2 L54.6 462.3 V464.7 L58.8 462 V471.85 z" fill="#000"/>
<polygon points="69.1,450 212.5,450 212.5,480 69.1,480 76.7,465.0" fill="#00ffff"/>
<polygon points="72.60,452.15 210.35,452.15 210.35,477.6 72.73,477.6 79.11,465.0" fill="#1e1616"/>
<polygon points="75.12,453.7 208.8,453.7 208.8,476.1 75.22,476.1 80.85,465.0" fill="#000" stroke="#000" stroke-width="0.8" stroke-linejoin="round" filter="url(#blur1)"/>
<rect x="80" y="462.1" width="10.1" height="1.8" fill="#fff"/>
<path d="M80 466 h2.1 M83.1 466 h3 M87.2 466 h2.9" stroke="#fff" stroke-width="1.8" fill="none"/>
<text transform="translate(94.39,469.9) scale(0.8999,1)" font-size="14.3" fill="#fff" font-weight="normal">500µV</text>
<text transform="translate(135.69,469.9) scale(0.9377,1)" font-size="14.3" fill="#fff" font-weight="normal">1.000X</text>
<path d="M181.5 460.6 V469.9 H185.6 Q187.6 469.9 187.6 467.3 Q187.6 465 185.2 465 H183.6 M181.5 460.6 H185 Q187 460.6 187 462.7 Q187 465 185.2 465" fill="none" stroke="#fff" stroke-width="1.15"/>
<polygon points="214,450 235.5,450 243,465.0 235.5,480 214,480" fill="#808080"/>
<polygon points="216,452 234.3,452 240.5,465.0 234.3,478 216,478" fill="url(#lab)"/>
<text transform="translate(221.31,471.7) scale(1.0643,1)" font-size="18.5" fill="#fff" font-weight="bold">2</text>
<polygon points="237.1,450 380,450 380,480 237.1,480 244.6,465.0" fill="#808080"/>
<polygon points="240.58,452.15 377.85,452.15 377.85,477.6 240.70,477.6 247.00,465.0" fill="#242020"/>
<polygon points="243.09,453.7 376.3,453.7 376.3,476.1 243.19,476.1 248.74,465.0" fill="#080404" stroke="#080404" stroke-width="0.8" stroke-linejoin="round" filter="url(#blur1)"/>
<text transform="translate(298.93,469.8) scale(0.8384,1)" font-size="14.3" fill="#fff" font-weight="normal">OFF</text>
<polygon points="382,450 403.5,450 411,465.0 403.5,480 382,480" fill="#808080"/>
<polygon points="384,452 402.3,452 408.5,465.0 402.3,478 384,478" fill="url(#lab)"/>
<text transform="translate(389.57,471.7) scale(1.0322,1)" font-size="18.5" fill="#fff" font-weight="bold">3</text>
<polygon points="405.1,450 548,450 548,480 405.1,480 412.6,465.0" fill="#808080"/>
<polygon points="408.58,452.15 545.85,452.15 545.85,477.6 408.70,477.6 415.00,465.0" fill="#242020"/>
<polygon points="411.09,453.7 544.3,453.7 544.3,476.1 411.19,476.1 416.74,465.0" fill="#080404" stroke="#080404" stroke-width="0.8" stroke-linejoin="round" filter="url(#blur1)"/>
<text transform="translate(466.93,469.8) scale(0.8384,1)" font-size="14.3" fill="#fff" font-weight="normal">OFF</text>
<polygon points="550,450 571.5,450 579,465.0 571.5,480 550,480" fill="#808080"/>
<polygon points="552,452 570.3,452 576.5,465.0 570.3,478 552,478" fill="url(#lab)"/>
<text transform="translate(557.73,471.7) scale(0.9598,1)" font-size="18.5" fill="#fff" font-weight="bold">4</text>
<polygon points="573.1,450 716,450 716,480 573.1,480 580.6,465.0" fill="#808080"/>
<polygon points="576.58,452.15 713.85,452.15 713.85,477.6 576.70,477.6 583.00,465.0" fill="#242020"/>
<polygon points="579.09,453.7 712.3,453.7 712.3,476.1 579.19,476.1 584.74,465.0" fill="#080404" stroke="#080404" stroke-width="0.8" stroke-linejoin="round" filter="url(#blur1)"/>
<text transform="translate(634.93,469.8) scale(0.8384,1)" font-size="14.3" fill="#fff" font-weight="normal">OFF</text>
<rect x="718" y="450" width="20" height="30" fill="#808080"/>
<rect x="720" y="452" width="16" height="26" fill="url(#small)"/>
<g stroke="#f4f4f4" fill="none" stroke-width="1.3" stroke-linecap="round"><path d="M728 458 V472" stroke="#d8d8d8" stroke-width="1.5"/><path d="M723.6 464.5 Q723.8 467.2 726 468.3 Q727.8 469.3 728 471"/><path d="M732.3 463 Q732.2 465.6 730 466.6 Q728.2 467.5 728 469"/></g>
<polygon points="728,456 730,459.2 726,459.2" fill="#fff"/>
<circle cx="728" cy="473.8" r="2.2" fill="#fff"/>
<circle cx="723.5" cy="463.8" r="1.5" fill="#fff"/>
<rect x="730.9" y="460.5" width="2.9" height="2.9" rx="0.5" fill="#fff"/>
<rect x="740" y="450" width="60" height="30" fill="#808080"/>
<rect x="742" y="452" width="56" height="26" fill="url(#small)"/>
<text transform="translate(756.39,462) scale(0.9796,1)" font-size="11" fill="#fff" font-weight="normal">16:03</text>
<text transform="translate(744.28,474.8) scale(1.0351,1)" font-size="10" fill="#fff" font-weight="normal">2022/10/30</text>
</g>
</svg></body></html>
